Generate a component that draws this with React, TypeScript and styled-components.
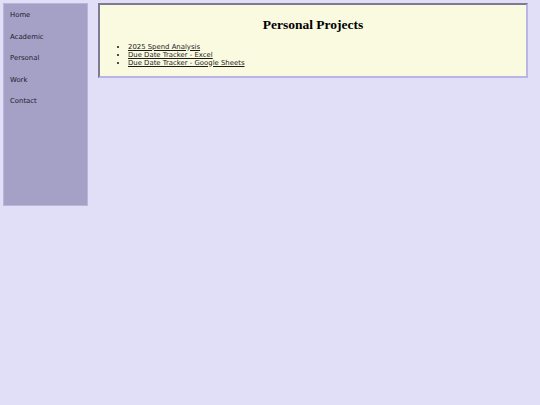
import React, { ReactElement } from 'react';
import styled, { createGlobalStyle } from 'styled-components';

const NAV_ITEMS = ['Home', 'Academic', 'Personal', 'Work', 'Contact'];

const PROJECTS = [
  '2025 Spend Analysis',
  'Due Date Tracker - Excel',
  'Due Date Tracker - Google Sheets',
];

const GlobalStyle = createGlobalStyle`
  html, body {
    margin: 0;
    padding: 0;
    background-color: #e1dff7;
  }
  body {
    min-height: 405px;
    font-family: 'DejaVu Sans', sans-serif;
  }
`;

const App = (): ReactElement => (
  <>
    <GlobalStyle />
    <Page>
      <Sidebar>
        <NavList>
          {NAV_ITEMS.map((item) => (
            <NavItem key={item}>{item}</NavItem>
          ))}
        </NavList>
      </Sidebar>
      <Main>
        <Title>Personal Projects</Title>
        <ProjectList>
          {PROJECTS.map((project) => (
            <ProjectItem key={project}>
              <ProjectLink href="#">{project}</ProjectLink>
            </ProjectItem>
          ))}
        </ProjectList>
      </Main>
    </Page>
  </>
);

const Page = styled.div`
  display: flex;
  align-items: flex-start;
  gap: 10px;
  padding: 3px;
`;

const Sidebar = styled.nav`
  box-sizing: border-box;
  width: 85px;
  height: 203px;
  background-color: #a5a1c6;
  border: 1px solid #b9b6d8;
  padding: 7px 6px;
`;

const NavList = styled.ul`
  list-style: none;
  margin: 0;
  padding: 0;
`;

const NavItem = styled.li`
  font-size: 6.9px;
  line-height: 8px;
  color: #1c1b2b;
  margin-bottom: 13.6px;
`;

const Main = styled.main`
  box-sizing: border-box;
  width: 430px;
  background-color: #fafae1;
  border: 2px solid;
  border-color: #7d7b92 #b9b5e4 #b9b5e4 #7d7b92;
  padding: 12px 0 9px;
`;

const Title = styled.h1`
  margin: 0 0 10px;
  font-family: 'Liberation Serif', serif;
  font-weight: bold;
  font-size: 13.5px;
  line-height: 15.5px;
  text-align: center;
  color: #000;
`;

const ProjectList = styled.ul`
  margin: 0;
  padding-left: 28px;
  font-size: 6.9px;
  line-height: 8px;
`;

const ProjectItem = styled.li`
  color: #111;
`;

const ProjectLink = styled.a`
  color: #1a1a1a;
  text-decoration: underline;
`;

export default App;
